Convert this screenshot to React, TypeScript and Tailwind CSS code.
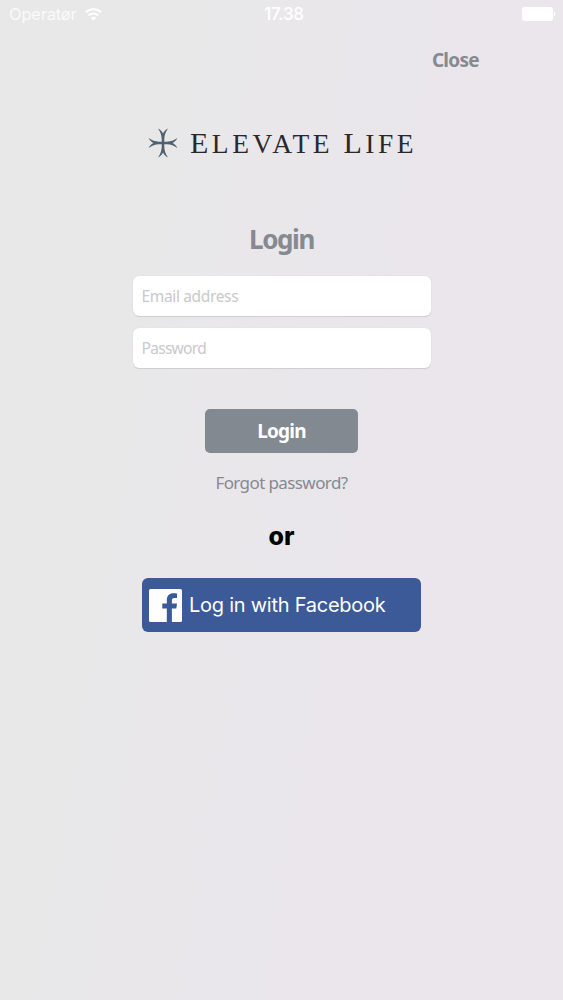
import { useState } from "react"
import type { FormEvent } from "react"
import clsx from "clsx"

const FIELD_CLASS =
    "block w-[298px] h-10 px-[9px] rounded-md bg-white text-[#555] placeholder:text-[#c9c9cb] placeholder:opacity-100 shadow-[0_0_1px_0_rgba(0,0,0,0.12),0_1px_1px_rgba(0,0,0,0.1)] outline-none text-[15.5px]"

function WifiIcon() {
    return (
        <svg width="17" height="13" viewBox="0 0 17 13" fill="none" stroke="white" strokeWidth="2.1">
            <path d="M1 4.3C5.2 .3 11.8 .3 16 4.3" />
            <path d="M3.6 7.4C6.4 4.8 10.6 4.8 13.4 7.4" />
            <path d="M8.5 12.6L5.8 9.9C7.3 8.5 9.7 8.5 11.2 9.9Z" fill="white" stroke="none" />
        </svg>
    )
}

function BatteryIcon() {
    return (
        <svg width="34" height="14" viewBox="0 0 34 14" fill="white">
            <rect width="31" height="14" rx="3" />
            <path d="M32 4.5C34 5.5 34 8.5 32 9.5Z" />
        </svg>
    )
}

function CrossIcon() {
    return (
        <svg width="30" height="30" viewBox="-15 -15 30 30" fill="#4d6170">
            {[0, 90, 180, 270].map((angle) => (
                <path
                    key={angle}
                    transform={`rotate(${angle})`}
                    d="M-1.3 1V-4C-1.5 -8 -2.6 -11 -5 -14.4C-2.4 -13.2 -1 -11.4 0 -9.4C1 -11.4 2.4 -13.2 5 -14.4C2.6 -11 1.5 -8 1.3 -4V1Z"
                />
            ))}
        </svg>
    )
}

function FacebookIcon() {
    return (
        <svg width="33" height="33" viewBox="0 0 33 33">
            <rect width="33" height="33" rx="1.6" fill="white" />
            <path
                fill="#3c5998"
                d="M17.8 33V19.6H13.3V14.6H17.8V11C17.8 6.6 20.4 4.2 24.3 4.2C26 4.2 27.4 4.3 28 4.4V8.9H25.4C23.3 8.9 22.9 9.9 22.9 11.4V14.6H28L27.3 19.6H22.9V33Z"
            />
        </svg>
    )
}

export default function App() {
    const [email, setEmail] = useState("")
    const [password, setPassword] = useState("")

    const onSubmit = (e: FormEvent) => {
        e.preventDefault()
    }

    return (
        <div className="w-[563px] h-[1000px] overflow-hidden flex flex-col bg-linear-[100deg,#e8e8e8_15%,#e9e7ea_45%,#eae6ec_70%] font-['Noto_Sans',sans-serif] text-[#868990]">
            {/* Status bar */}
            <div className="h-7 pl-[9px] pr-[7px] grid grid-cols-3 items-center text-white">
                <div className="flex items-center gap-2">
                    <span className="font-['Inter',sans-serif] text-[16.5px] leading-6 tracking-[-0.2px] opacity-80">Operatør</span>
                    <WifiIcon />
                </div>
                <span className="text-center font-['Inter',sans-serif] font-medium text-[17px] leading-6 tracking-[-0.2px] pl-[3px]">17.38</span>
                <div className="flex justify-end">
                    <BatteryIcon />
                </div>
            </div>

            <div className="flex justify-end pr-[84px] mt-[18px]">
                <button type="button" className="font-bold text-[19px] leading-7 tracking-[-0.7px]">Close</button>
            </div>

            {/* Brand */}
            <div className="flex items-center h-[30px] mt-[54px] ml-[148px]">
                <CrossIcon />
                <h1 className="ml-[12px] whitespace-nowrap font-['Liberation_Serif',serif] text-[27.5px] leading-[30px] tracking-[3.5px] text-[#29292d]">
                    <span className="text-[30px]">E</span>LEVATE <span className="text-[30px]">L</span>IFE
                </h1>
            </div>

            <form onSubmit={onSubmit} className="flex flex-col items-center mt-[63px]">
                <h2 className="font-bold text-[26px] leading-9 tracking-[-1.4px]">Login</h2>
                <div className="mt-[19px] flex flex-col gap-3">
                    <input
                        type="email"
                        placeholder="Email address"
                        value={email}
                        onChange={(e) => setEmail(e.target.value)}
                        className={clsx(FIELD_CLASS, "tracking-[-0.35px]")}
                    />
                    <input
                        type="password"
                        placeholder="Password"
                        value={password}
                        onChange={(e) => setPassword(e.target.value)}
                        className={clsx(FIELD_CLASS, "tracking-[-0.7px]")}
                    />
                </div>
                <button type="submit" className="mt-[41px] w-[153px] h-11 rounded-[5px] bg-[#828991] text-white font-bold text-[19px] tracking-[-0.8px]">
                    Login
                </button>
            </form>

            <div className="flex flex-col items-center">
                <a href="#" className="mt-[18px] text-[17px] leading-6 tracking-[-0.6px]">Forgot password?</a>
                <p className="mt-[25px] font-['Inter',sans-serif] font-extrabold text-[25px] leading-8 text-black">or</p>
                <button type="button" className="mt-[26px] w-[279px] h-[54px] pl-[7px] flex items-center rounded-md bg-[#3c5998] text-white">
                    <FacebookIcon />
                    <span className="ml-[7px] font-['Inter',sans-serif] text-[20px] tracking-[-0.25px] whitespace-nowrap">Log in with Facebook</span>
                </button>
            </div>
        </div>
    )
}
